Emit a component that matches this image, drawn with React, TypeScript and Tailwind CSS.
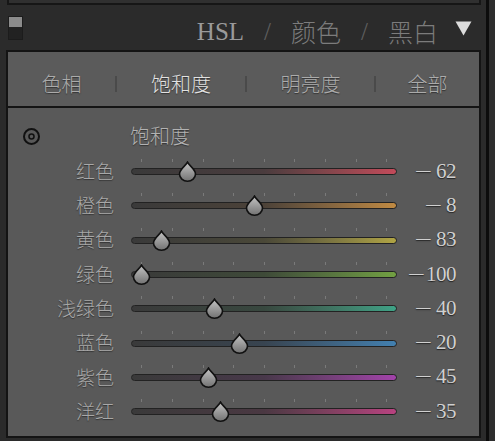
import React from 'react'

interface IRow {
  label: string
  value: number
  track: string
}

const rows: IRow[] = [
  { label: '红色', value: -62, track: 'bg-linear-to-r from-[#3a3a3a] via-[#4a3c3e] to-[#c24a5a]' },
  { label: '橙色', value: -8, track: 'bg-linear-to-r from-[#3a3a3a] via-[#4c4238] to-[#c08a42]' },
  { label: '黄色', value: -83, track: 'bg-linear-to-r from-[#3a3a3a] via-[#4a4838] to-[#b0a444]' },
  { label: '绿色', value: -100, track: 'bg-linear-to-r from-[#3a3a3a] via-[#3e4a38] to-[#72a042]' },
  { label: '浅绿色', value: -40, track: 'bg-linear-to-r from-[#3a3a3a] via-[#38483f] to-[#3ea286]' },
  { label: '蓝色', value: -20, track: 'bg-linear-to-r from-[#3a3a3a] via-[#384450] to-[#4280b0]' },
  { label: '紫色', value: -45, track: 'bg-linear-to-r from-[#3a3a3a] via-[#48384a] to-[#a242aa]' },
  { label: '洋红', value: -35, track: 'bg-linear-to-r from-[#3a3a3a] via-[#4a3842] to-[#b84280]' },
]

const ticks = [10, 41, 72, 102, 133, 163, 194, 225, 255]

const cjk = { fontFamily: '"Noto Sans CJK SC", sans-serif' }
const serif = { fontFamily: '"Liberation Serif", serif' }

const Thumb: React.FC = () => (
  <svg width="19" height="21" viewBox="0 0 19 21">
    <defs>
      <linearGradient id="thumbFill" x1="0" y1="0" x2="0" y2="1">
        <stop offset="0%" stopColor="#c4c4c4" />
        <stop offset="100%" stopColor="#727272" />
      </linearGradient>
    </defs>
    <path
      d="M9.5 1.2 C11 4.5 17.5 8 17.5 13 A8 7.2 0 0 1 1.5 13 C1.5 8 8 4.5 9.5 1.2 Z"
      fill="url(#thumbFill)"
      stroke="#111"
      strokeWidth="1.6"
    />
  </svg>
)

const SliderRow: React.FC<{ row: IRow }> = ({ row }) => {
  const left = 10 + ((row.value + 100) / 200) * 246
  return (
    <div className="flex h-[34.3px] items-center">
      <div
        className="w-[107px] pr-[1px] text-right text-[19px] font-light text-[#a8a8a8] [text-shadow:0_1px_1px_#333]"
        style={cjk}
      >
        {row.label}
      </div>
      <div className="relative ml-[16px] h-[34px] w-[266px]">
        {ticks.map(t => (
          <div key={t} className="absolute top-[5px] h-[3px] w-[1px] bg-[#7a7a7a]" style={{ left: t }} />
        ))}
        <div className={`absolute top-[14px] h-[7px] w-full rounded-full border border-[#222] ${row.track}`} />
        <div className="absolute top-[7px]" style={{ left: left - 9.5 }}>
          <Thumb />
        </div>
      </div>
      <div
        className="flex w-[59px] items-center justify-end whitespace-nowrap text-[21px] leading-none text-[#d0d0d0] [text-shadow:0_1px_1px_#222]"
        style={serif}
      >
        <span className={`${row.value === -100 ? 'mr-[5px]' : 'mr-[8px]'} inline-block -translate-y-[1px] scale-x-[1.35]`}>
          –
        </span>
        <span className="tracking-[-0.5px]">{Math.abs(row.value)}</span>
      </div>
    </div>
  )
}

const tabs = [
  { label: '色相', w: 'w-[107px]' },
  { label: '饱和度', w: 'w-[128px]' },
  { label: '明亮度', w: 'w-[127px]' },
  { label: '全部', w: 'flex-1' },
]

const App: React.FC = () => {
  return (
    <div className="flex h-[441px] w-[495px] overflow-hidden bg-[#2b2b2b]">
      <div className="flex w-[486px] flex-col">
        <div className="ml-[7px] h-[5px] w-[474px] border-x-2 border-b-2 border-[#161616] bg-[#303030]" />
        <div className="flex h-[45px] items-center pt-[5px]">
          <div className="mb-[4px] ml-[8px] flex h-[24px] w-[15px] flex-col border border-[#1c1c1c] bg-[#222]">
            <div className="h-[10px] bg-[#8c8c8c]" />
          </div>
          <div
            className="ml-auto flex items-center pt-[4px] text-[25px] font-light text-[#7c7c7c]"
            style={{ fontFamily: '"Liberation Serif", "Noto Sans CJK SC", serif' }}
          >
            <span className="font-normal text-[#9a9a9a]">HSL</span>
            <span className="mx-[20px] font-normal text-[#5e5e5e]">/</span>
            <span style={cjk}>颜色</span>
            <span className="mx-[20px] font-normal text-[#5e5e5e]">/</span>
            <span style={cjk}>黑白</span>
          </div>
          <svg className="mb-[4px] ml-[17px] mr-[14px]" width="17" height="15" viewBox="0 0 17 15">
            <path d="M0.5 0.5 H16.5 L8.5 14.5 Z" fill="#dcdcdc" />
          </svg>
        </div>
        <div className="ml-[6px] flex w-[475px] flex-1 flex-col border-x-2 border-b-2 border-[#141414] bg-[#595959]">
          <div className="flex h-[58px] items-center border-y-2 border-[#141414] bg-[#5b5b5b] pt-[9px]">
            {tabs.map((t, i) => (
              <React.Fragment key={t.label}>
                {i > 0 && <div className="h-[16px] w-[2px] bg-[#4a4a4a]" />}
                <div
                  className={`${t.w} text-center text-[20px] font-light ${i === 1 ? 'text-[#e2e2e2]' : 'text-[#ababab]'} [text-shadow:0_1px_1px_#333]`}
                  style={cjk}
                >
                  {t.label}
                </div>
              </React.Fragment>
            ))}
          </div>
          <div className="flex h-[44px] items-center pt-[12px]">
            <svg className="ml-[14px]" width="19" height="19" viewBox="0 0 19 19">
              <circle cx="9.5" cy="9.5" r="7.5" fill="none" stroke="#111" strokeWidth="2" />
              <circle cx="9.5" cy="9.5" r="2.5" fill="none" stroke="#111" strokeWidth="1.6" />
            </svg>
            <div
              className="ml-[89px] text-[20px] font-light text-[#b2b2b2] [text-shadow:0_1px_1px_#333]"
              style={cjk}
            >
              饱和度
            </div>
          </div>
          <div className="flex flex-col pt-[2px]">
            {rows.map(r => (
              <SliderRow key={r.label} row={r} />
            ))}
          </div>
        </div>
        <div className="h-[3px]" />
      </div>
      <div className="w-[3px] bg-[#0c0c0c]" />
      <div className="flex-1 bg-[#2e2e2e]" />
    </div>
  )
}

export default App
